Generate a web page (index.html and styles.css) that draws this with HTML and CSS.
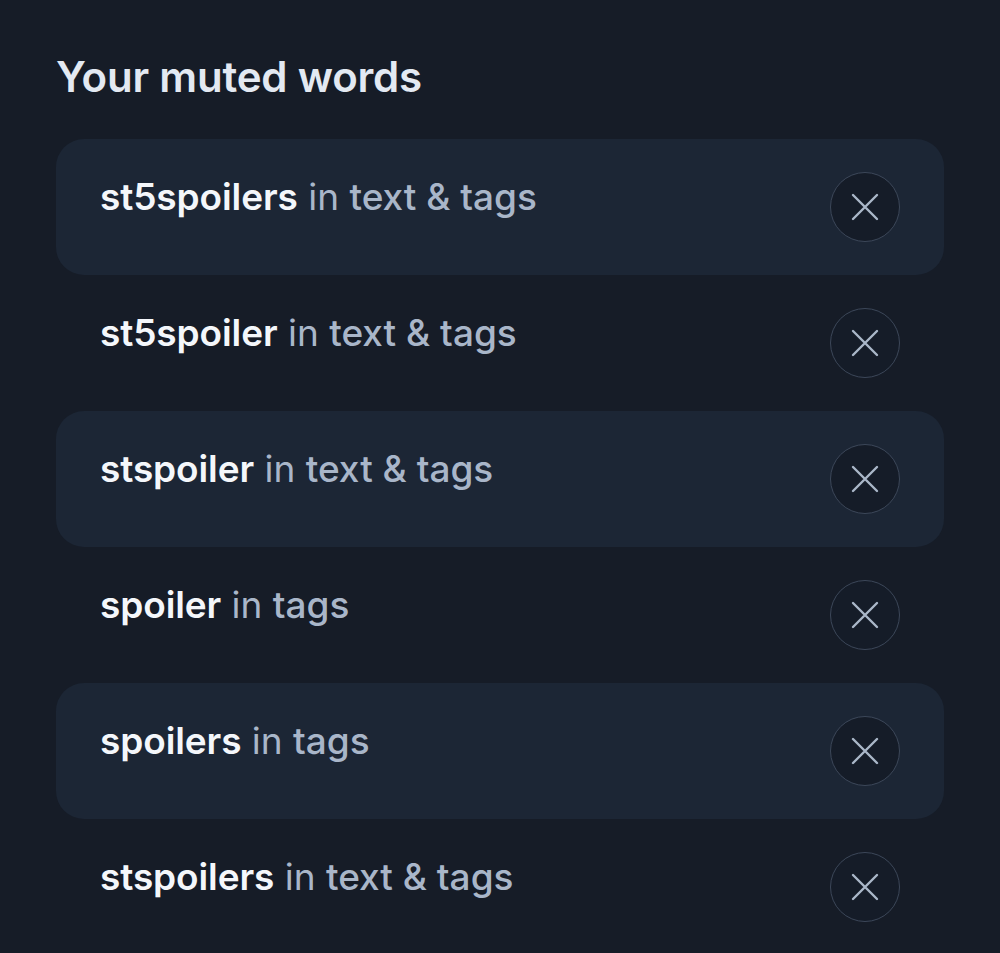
FILE: index.html
```html
<!DOCTYPE html>
<html>
<head>
<meta charset="utf-8">
<link rel="stylesheet" href="styles.css">
</head>
<body>
<main class="page">
  <h1 class="title">Your muted words</h1>
  <ul class="list">
    <li class="row alt"><span class="text"><b class="word">st5spoilers</b> <span class="in">in</span> <span class="scope">text &amp; tags</span></span><button class="remove" aria-label="Remove"><svg viewBox="0 0 28 28" width="28" height="28"><path d="M2 2L26 26M26 2L2 26"/></svg></button></li>
    <li class="row"><span class="text"><b class="word">st5spoiler</b> <span class="in">in</span> <span class="scope">text &amp; tags</span></span><button class="remove" aria-label="Remove"><svg viewBox="0 0 28 28" width="28" height="28"><path d="M2 2L26 26M26 2L2 26"/></svg></button></li>
    <li class="row alt"><span class="text"><b class="word">stspoiler</b> <span class="in">in</span> <span class="scope">text &amp; tags</span></span><button class="remove" aria-label="Remove"><svg viewBox="0 0 28 28" width="28" height="28"><path d="M2 2L26 26M26 2L2 26"/></svg></button></li>
    <li class="row"><span class="text"><b class="word">spoiler</b> <span class="in">in</span> <span class="scope">tags</span></span><button class="remove" aria-label="Remove"><svg viewBox="0 0 28 28" width="28" height="28"><path d="M2 2L26 26M26 2L2 26"/></svg></button></li>
    <li class="row alt"><span class="text"><b class="word">spoilers</b> <span class="in">in</span> <span class="scope">tags</span></span><button class="remove" aria-label="Remove"><svg viewBox="0 0 28 28" width="28" height="28"><path d="M2 2L26 26M26 2L2 26"/></svg></button></li>
    <li class="row"><span class="text"><b class="word">stspoilers</b> <span class="in">in</span> <span class="scope">text &amp; tags</span></span><button class="remove" aria-label="Remove"><svg viewBox="0 0 28 28" width="28" height="28"><path d="M2 2L26 26M26 2L2 26"/></svg></button></li>
  </ul>
</main>
</body>
</html>
```
FILE: styles.css
```css
html, body {
  margin: 0;
  padding: 0;
  background: #161c27;
  font-family: Inter, "Noto Sans", sans-serif;
}
.page {
  padding: 53px 56px 0 56px;
}
.title {
  margin: 0 0 38px 0;
  font-size: 42px;
  line-height: 48px;
  font-weight: 600;
  color: #e3e9f2;
  letter-spacing: -0.2px;
}
.list {
  list-style: none;
  margin: 0;
  padding: 0;
}
.row {
  display: flex;
  align-items: center;
  justify-content: space-between;
  height: 136px;
  box-sizing: border-box;
  padding: 0 44px 0 44px;
  border-radius: 28px;
}
.row.alt {
  background: #1c2635;
}
.text {
  font-size: 37px;
  line-height: 44px;
  margin-top: -20px;
  color: #a9b6c9;
}
.word {
  font-weight: 600;
  color: #f4f7fb;
  letter-spacing: -0.1px;
}
.in {
  font-weight: 400;
}
.scope {
  font-weight: 500;
}
.remove {
  width: 70px;
  height: 70px;
  border-radius: 50%;
  border: 1px solid #3c4759;
  background: #151c28;
  display: flex;
  align-items: center;
  justify-content: center;
  padding: 0;
}
.remove svg path {
  stroke: #aab7c9;
  stroke-width: 2.4;
  stroke-linecap: round;
  fill: none;
}
```
